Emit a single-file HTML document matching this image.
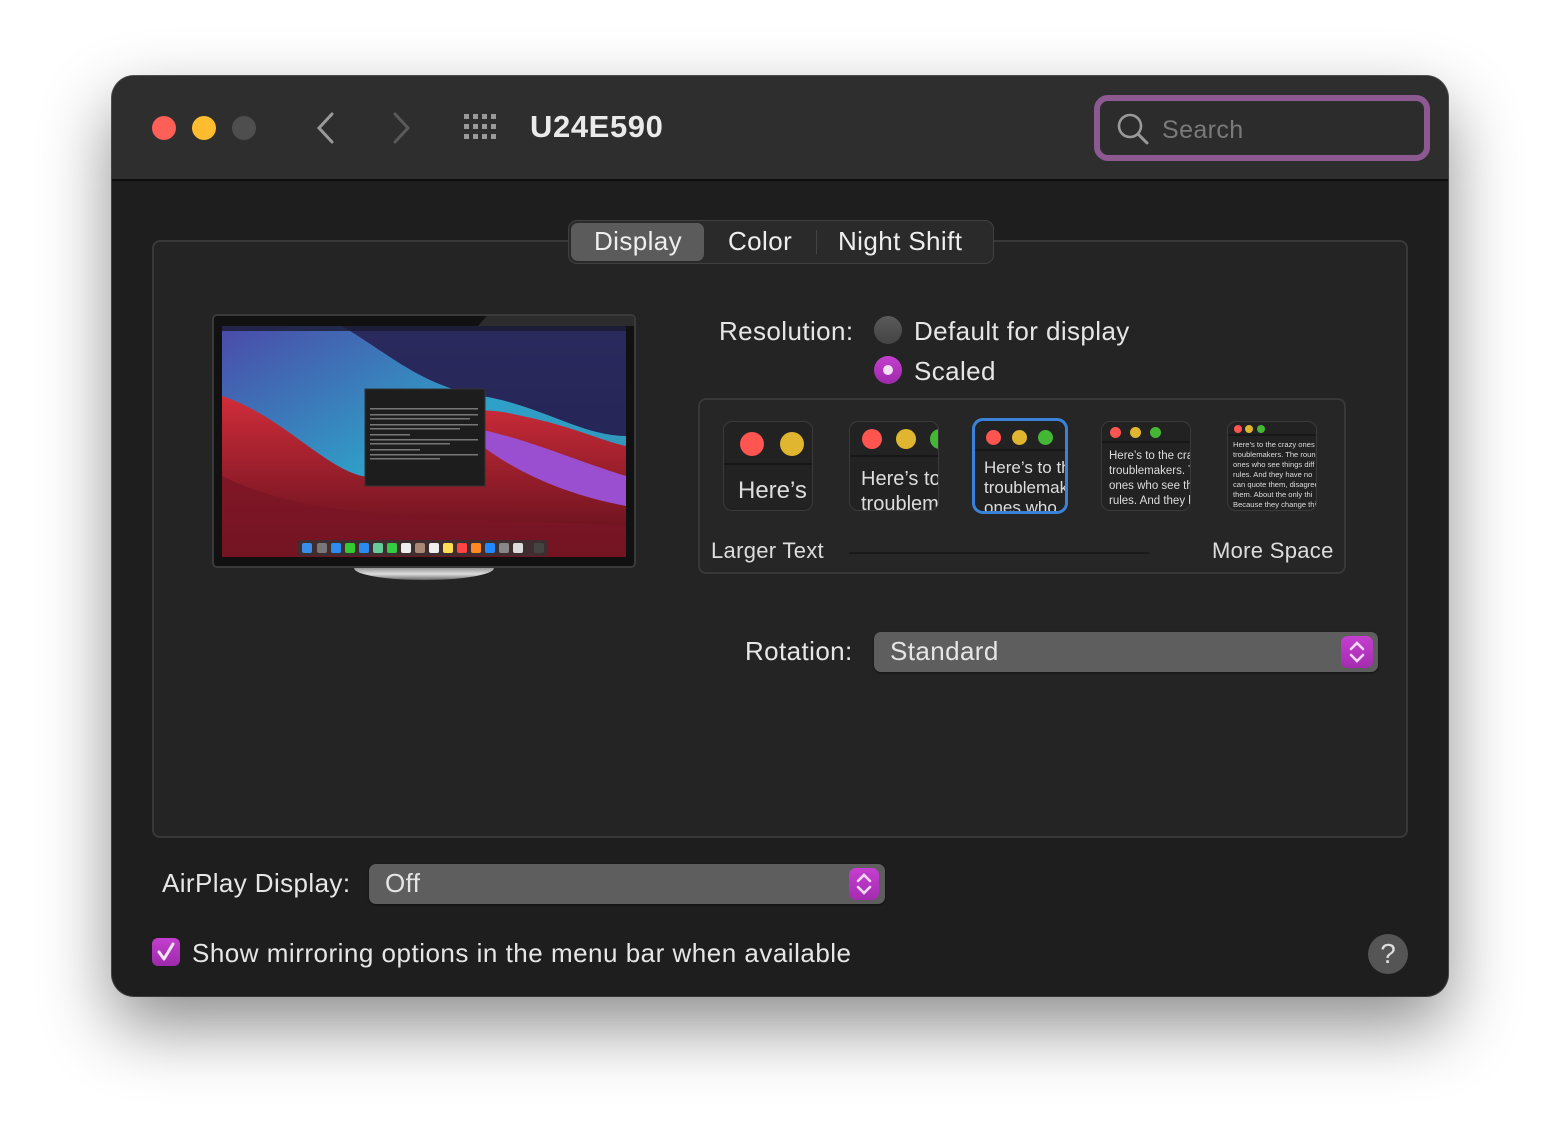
<!DOCTYPE html>
<html><head><meta charset="utf-8"><style>
*{margin:0;padding:0;box-sizing:border-box}
body{width:1560px;height:1144px;background:#fff;position:relative;overflow:hidden;font-family:"Liberation Sans",sans-serif;color:#e6e6e6}
.abs{position:absolute}
.win{left:112px;top:76px;width:1336px;height:920px;border-radius:22px;background:#1e1e1e;box-shadow:0 30px 70px rgba(0,0,0,.45),0 0 0 1px #555;overflow:hidden}
.tb{left:0;top:0;width:1336px;height:105px;background:#2e2e2e;border-bottom:2px solid #0e0e0e}
.dot{width:24px;height:24px;border-radius:50%}
.t26{font-size:26px;white-space:nowrap;letter-spacing:0.4px}
.thumb{background:#222;border:1px solid #3a3a3a;border-radius:9px;overflow:hidden;width:90px;height:90px}
.thumb .bar{position:absolute;left:0;right:0;top:0;border-bottom:2px solid #171717}
.thumb .txt{position:absolute;left:0;color:#ddd;white-space:nowrap}
.c{border-radius:50%;position:absolute}
.pop{background:#5e5e5e;border-radius:7px;box-shadow:0 1px 2px rgba(0,0,0,.5)}
.step{width:32px;height:32px;border-radius:7px;background:linear-gradient(#c53fd0,#a42cb0)}
</style></head><body>
<div class="abs win">
 <div class="abs tb">
  <div class="abs dot" style="left:40px;top:40px;background:#fe5f57"></div>
  <div class="abs dot" style="left:80px;top:40px;background:#febc2e"></div>
  <div class="abs dot" style="left:120px;top:40px;background:#4e4e4e"></div>
  <svg class="abs" style="left:200px;top:34px" width="30" height="36"><path d="M20 4 L7 18 L20 32" stroke="#9a9a9a" stroke-width="3" fill="none" stroke-linecap="round"/></svg>
  <svg class="abs" style="left:275px;top:34px" width="30" height="36"><path d="M8 4 L21 18 L8 32" stroke="#5a5a5a" stroke-width="3" fill="none" stroke-linecap="round"/></svg>
  <svg class="abs" style="left:352px;top:38px" width="38" height="28" fill="#9a9a9a">
   <rect x="0" y="0" width="5" height="5"/><rect x="9" y="0" width="5" height="5"/><rect x="18" y="0" width="5" height="5"/><rect x="27" y="0" width="5" height="5"/>
   <rect x="0" y="10" width="5" height="5"/><rect x="9" y="10" width="5" height="5"/><rect x="18" y="10" width="5" height="5"/><rect x="27" y="10" width="5" height="5"/>
   <rect x="0" y="20" width="5" height="5"/><rect x="9" y="20" width="5" height="5"/><rect x="18" y="20" width="5" height="5"/><rect x="27" y="20" width="5" height="5"/>
  </svg>
  <div class="abs" style="left:418px;top:33px;font-size:31px;font-weight:bold;color:#eaeaea;letter-spacing:0.6px">U24E590</div>
  <div class="abs" style="left:982px;top:19px;width:336px;height:66px;border:6px solid #8c5a91;border-radius:14px;background:#2c2c2c"></div>
  <svg class="abs" style="left:1004px;top:36px" width="36" height="36"><circle cx="14" cy="14" r="11" stroke="#9a9a9a" stroke-width="2.6" fill="none"/><path d="M22 22 L31 31" stroke="#9a9a9a" stroke-width="3" stroke-linecap="round"/></svg>
  <div class="abs t26" style="left:1050px;top:40px;color:#7a7a7a;font-size:25px">Search</div>
 </div>

 <div class="abs" style="left:40px;top:164px;width:1256px;height:598px;background:#242424;border:2px solid #383838;border-radius:8px"></div>
 <div class="abs" style="left:456px;top:144px;width:426px;height:44px;background:#2a2a2a;border:1.5px solid #404040;border-radius:9px"></div>
 <div class="abs" style="left:459px;top:147px;width:133px;height:38px;background:#5b5b5b;border-radius:7px"></div>
 <div class="abs" style="left:704px;top:154px;width:1px;height:24px;background:#444"></div>
 <div class="abs t26" style="left:482px;top:150px;color:#eee">Display</div>
 <div class="abs t26" style="left:616px;top:150px;color:#eee">Color</div>
 <div class="abs t26" style="left:726px;top:150px;color:#eee">Night Shift</div>

 <!-- monitor -->
 <div class="abs" style="left:100px;top:238px;width:424px;height:254px;background:#111;border:2px solid #3a3a3a;border-radius:5px;overflow:hidden">
  <div class="abs" style="left:270px;top:-4px;width:170px;height:14px;background:#2c2c2c;transform:skewX(-40deg)"></div>
 </div>
 <svg class="abs" style="left:110px;top:250px" width="404" height="231">
  <defs>
   <linearGradient id="g1" x1="0" y1="0" x2="0" y2="1"><stop offset="0" stop-color="#2b2a5e"/><stop offset="1" stop-color="#1f2050"/></linearGradient>
   <linearGradient id="g2" x1="0" y1="0" x2="1" y2="1"><stop offset="0" stop-color="#4b4aa8"/><stop offset=".5" stop-color="#2fa0c8"/><stop offset="1" stop-color="#3390b0"/></linearGradient>
   <linearGradient id="g3" x1="0" y1="0" x2="0" y2="1"><stop offset="0" stop-color="#d12c3a"/><stop offset="1" stop-color="#5a0f1a"/></linearGradient>
  </defs>
  <rect width="404" height="231" fill="url(#g1)"/>
  <path d="M0 0 L120 0 C170 30 200 60 260 70 C320 80 360 110 404 110 L404 231 L0 231Z" fill="url(#g2)"/>
  <path d="M0 70 C60 90 100 140 140 150 C200 160 180 60 300 90 C350 100 380 115 404 120 L404 231 L0 231Z" fill="url(#g3)"/>
  <path d="M240 100 C300 110 340 130 404 150 L404 180 C350 170 300 150 260 120Z" fill="#9a4fd0"/>
  <path d="M0 150 C100 200 250 190 404 200 L404 231 L0 231Z" fill="#7a1525" opacity=".8"/>
  <rect width="404" height="5" fill="#1a1a30" opacity=".8"/>
  <rect x="143" y="63" width="120" height="97" fill="#1d1d1d" stroke="#333"/>
  <g fill="#777"><rect x="148" y="82" width="108" height="1.5"/><rect x="148" y="88" width="108" height="1.5"/><rect x="148" y="92" width="100" height="1.5"/><rect x="148" y="98" width="108" height="1.5"/><rect x="148" y="102" width="90" height="1.5"/><rect x="148" y="108" width="40" height="1.5"/><rect x="148" y="113" width="108" height="1.5"/><rect x="148" y="117" width="80" height="1.5"/><rect x="148" y="123" width="50" height="1.5"/><rect x="148" y="128" width="108" height="1.5"/><rect x="148" y="132" width="70" height="1.5"/></g>
  <rect x="76" y="214" width="250" height="16" rx="3" fill="#333" opacity=".8"/>
  <g><rect x="80" y="217" width="10" height="10" rx="2" fill="#3a8ee8"/><rect x="95" y="217" width="10" height="10" rx="2" fill="#777"/><rect x="109" y="217" width="10" height="10" rx="2" fill="#2d8cf0"/><rect x="123" y="217" width="10" height="10" rx="2" fill="#3c3"/><rect x="137" y="217" width="10" height="10" rx="2" fill="#2a8af0"/><rect x="151" y="217" width="10" height="10" rx="2" fill="#6c9"/><rect x="165" y="217" width="10" height="10" rx="2" fill="#3c4"/><rect x="179" y="217" width="10" height="10" rx="2" fill="#eee"/><rect x="193" y="217" width="10" height="10" rx="2" fill="#a87"/><rect x="207" y="217" width="10" height="10" rx="2" fill="#eee"/><rect x="221" y="217" width="10" height="10" rx="2" fill="#fd5"/><rect x="235" y="217" width="10" height="10" rx="2" fill="#f44"/><rect x="249" y="217" width="10" height="10" rx="2" fill="#f82"/><rect x="263" y="217" width="10" height="10" rx="2" fill="#28f"/><rect x="277" y="217" width="10" height="10" rx="2" fill="#888"/><rect x="291" y="217" width="10" height="10" rx="2" fill="#ddd"/><rect x="312" y="217" width="10" height="10" rx="2" fill="#444"/></g>
 </svg>
 <div class="abs" style="left:242px;top:492px;width:140px;height:12px;border-radius:0 0 70px 70px/0 0 12px 12px;background:linear-gradient(#999,#ddd,#666)"></div>

 <!-- resolution -->
 <div class="abs t26" style="left:607px;top:240px">Resolution:</div>
 <div class="abs" style="left:762px;top:240px;width:28px;height:28px;border-radius:50%;background:linear-gradient(#5a5a5a,#444)"></div>
 <div class="abs t26" style="left:802px;top:240px">Default for display</div>
 <div class="abs" style="left:762px;top:280px;width:28px;height:28px;border-radius:50%;background:linear-gradient(#c43fcf,#9d2aaa)"><div class="abs" style="left:9px;top:9px;width:10px;height:10px;border-radius:50%;background:#f4ddf6"></div></div>
 <div class="abs t26" style="left:802px;top:280px">Scaled</div>

 <div class="abs" style="left:586px;top:322px;width:648px;height:176px;background:#262626;border:2px solid #383838;border-radius:8px"></div>
 <div class="abs thumb" style="left:611px;top:345px"><div class="bar" style="height:43px"></div><div class="c" style="left:16px;top:10px;width:24px;height:24px;background:#fe5551"></div><div class="c" style="left:56px;top:10px;width:24px;height:24px;background:#e0b630"></div><div class="txt" style="top:55px;left:14px;font-size:24px">Here’s</div></div>
 <div class="abs thumb" style="left:737px;top:345px"><div class="bar" style="height:35px"></div><div class="c" style="left:12px;top:7px;width:20px;height:20px;background:#fe5551"></div><div class="c" style="left:46px;top:7px;width:20px;height:20px;background:#e0b630"></div><div class="c" style="left:80px;top:7px;width:20px;height:20px;background:#44b834"></div><div class="txt" style="top:45px;left:11px;font-size:20px;line-height:25px">Here’s to the<br>troublemakers</div></div>
 <div class="abs" style="left:860px;top:342px;width:96px;height:96px;border:3px solid #3a82d8;border-radius:11px"></div>
 <div class="abs thumb" style="left:863px;top:345px;border:none"><div class="bar" style="height:30px"></div><div class="c" style="left:11px;top:9px;width:15px;height:15px;background:#fe5551"></div><div class="c" style="left:37px;top:9px;width:15px;height:15px;background:#e0b630"></div><div class="c" style="left:63px;top:9px;width:15px;height:15px;background:#44b834"></div><div class="txt" style="top:37px;left:9px;font-size:17px;line-height:20px">Here’s to the<br>troublemakers<br>ones who</div></div>
 <div class="abs thumb" style="left:989px;top:345px"><div class="bar" style="height:21px"></div><div class="c" style="left:8px;top:5px;width:11px;height:11px;background:#fe5551"></div><div class="c" style="left:28px;top:5px;width:11px;height:11px;background:#e0b630"></div><div class="c" style="left:48px;top:5px;width:11px;height:11px;background:#44b834"></div><div class="txt" style="top:27px;left:7px;font-size:11.5px;line-height:15px">Here’s to the crazy<br>troublemakers. The<br>ones who see things<br>rules. And they have</div></div>
 <div class="abs thumb" style="left:1115px;top:345px"><div class="bar" style="height:14px"></div><div class="c" style="left:6px;top:3px;width:8px;height:8px;background:#fe5551"></div><div class="c" style="left:17px;top:3px;width:8px;height:8px;background:#e0b630"></div><div class="c" style="left:29px;top:3px;width:8px;height:8px;background:#44b834"></div><div class="txt" style="top:18px;left:5px;font-size:7.6px;line-height:10px">Here’s to the crazy ones<br>troublemakers. The round<br>ones who see things diff<br>rules. And they have no<br>can quote them, disagree<br>them. About the only thi<br>Because they change thi</div></div>
 <div class="abs" style="left:737px;top:476px;width:300px;height:2px;background:#1a1a1a"></div>
 <div class="abs" style="left:599px;top:462px;font-size:22px;color:#ddd;letter-spacing:0.3px">Larger Text</div>
 <div class="abs" style="left:1100px;top:462px;font-size:22px;color:#ddd;letter-spacing:0.3px">More Space</div>

 <div class="abs t26" style="left:633px;top:560px">Rotation:</div>
 <div class="abs pop" style="left:762px;top:556px;width:504px;height:40px"></div>
 <div class="abs t26" style="left:778px;top:560px">Standard</div>
 <div class="abs step" style="left:1229px;top:560px"><svg width="32" height="32"><path d="M10 13 L16 7 L22 13 M10 19 L16 25 L22 19" stroke="#f3d8f5" stroke-width="2.6" fill="none" stroke-linecap="round"/></svg></div>

 <div class="abs t26" style="left:50px;top:792px">AirPlay Display:</div>
 <div class="abs pop" style="left:257px;top:788px;width:516px;height:40px"></div>
 <div class="abs t26" style="left:273px;top:792px">Off</div>
 <div class="abs step" style="left:737px;top:792px;width:30px"><svg width="30" height="32"><path d="M9 13 L15 7 L21 13 M9 19 L15 25 L21 19" stroke="#f3d8f5" stroke-width="2.6" fill="none" stroke-linecap="round"/></svg></div>

 <div class="abs" style="left:40px;top:862px;width:28px;height:28px;border-radius:6px;background:linear-gradient(#c43fcf,#9d2aaa)"><svg width="28" height="28"><path d="M7 14 L12 21 L21 6" stroke="#f5e6f6" stroke-width="3" fill="none" stroke-linecap="round" stroke-linejoin="round"/></svg></div>
 <div class="abs t26" style="left:80px;top:862px;letter-spacing:0.5px">Show mirroring options in the menu bar when available</div>
 <div class="abs" style="left:1256px;top:858px;width:40px;height:40px;border-radius:50%;background:#555;text-align:center;font-size:28px;line-height:40px;color:#ddd">?</div>
</div>
</body></html>
